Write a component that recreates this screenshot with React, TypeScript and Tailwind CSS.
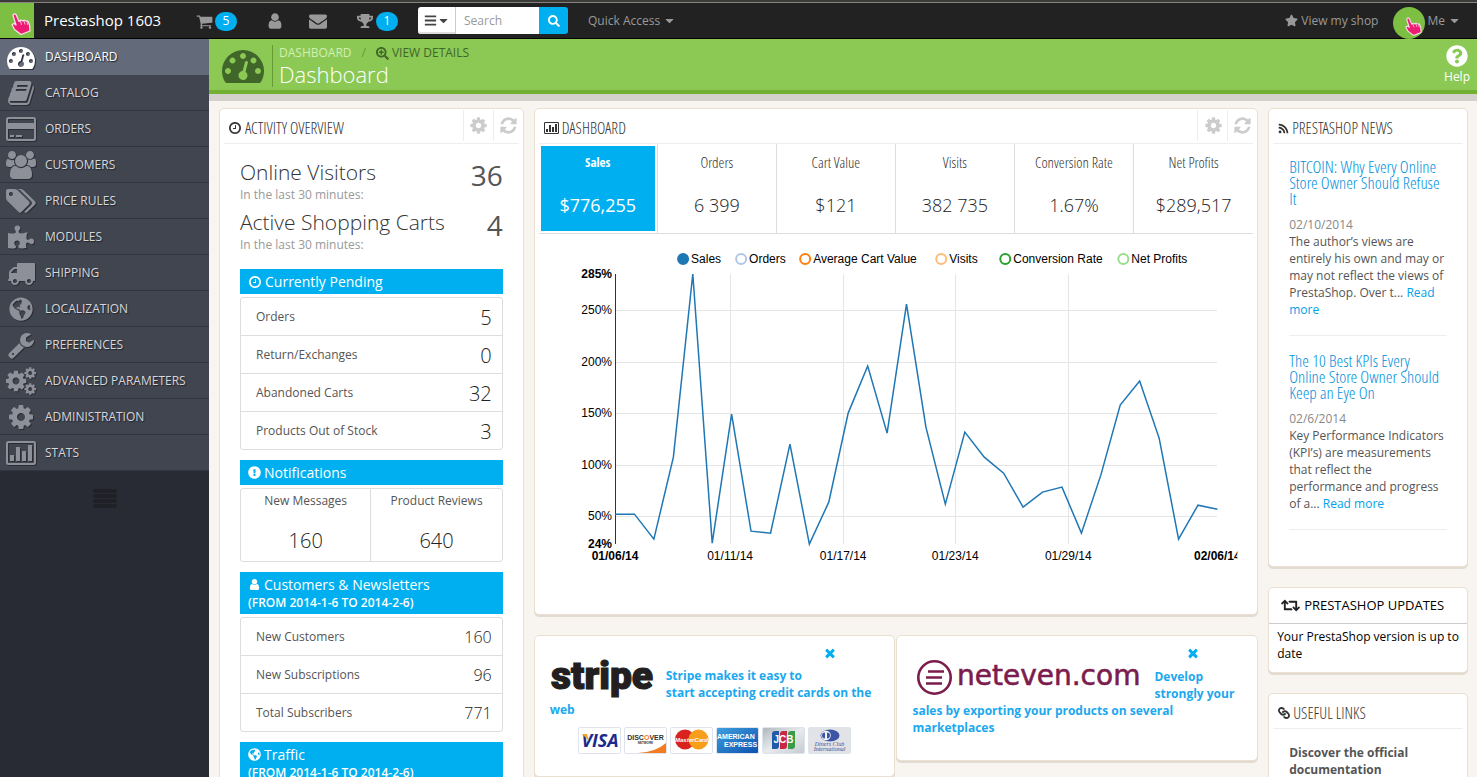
import React from "react";
import {
  FaBars,
  FaCaretDown,
  FaExclamationCircle,
  FaGlobeAmericas,
  FaLink,
  FaPuzzlePiece,
  FaQuestionCircle,
  FaRetweet,
  FaRss,
  FaSearch,
  FaSearchPlus,
  FaStar,
  FaTrophy,
} from "react-icons/fa";

const PATHS = {
  tachometer:
    "M384 1152q0-53-37.500-90.500t-90.500-37.500-90.500 37.500-37.500 90.500 37.500 90.500 90.500 37.500 90.500-37.500 37.500-90.500zm192-448q0-53-37.500-90.500t-90.500-37.500-90.500 37.500-37.500 90.500 37.500 90.500 90.500 37.500 90.500-37.500 37.500-90.500zm428 481l101-382q6-26-7.500-48.500t-38.500-29.500-48 6.500-30 39.500l-101 382q-60 5-107 43.500t-63 98.500q-20 77 20 146t117 89 146-20 89-117q16-60-6-117t-72-91zm660-33q0-53-37.500-90.500t-90.500-37.500-90.500 37.500-37.500 90.500 37.500 90.500 90.500 37.500 90.500-37.500 37.500-90.500zm-640-640q0-53-37.500-90.500t-90.500-37.500-90.500 37.500-37.500 90.500 37.500 90.500 90.500 37.500 90.500-37.500 37.500-90.500zm448 192q0-53-37.500-90.500t-90.500-37.500-90.500 37.500-37.500 90.500 37.500 90.500 90.500 37.500 90.500-37.500 37.500-90.500zm320 448q0 261-141 483-19 29-54 29h-1402q-35 0-54-29-141-221-141-483 0-182 71-348t191-286 286-191 348-71 348 71 286 191 191 286 71 348z",
  book: "M1703 478q40 57 18 129l-275 906q-19 64-76.500 107.500t-122.500 43.500h-923q-77 0-148.500-53.500t-99.500-131.500q-24-67-2-127 0-4 3-27t4-37q1-8-3-21.500t-3-19.500q2-11 8-21t16.500-23.500 16.500-23.500q23-38 45-91.500t30-91.500q3-10 .5-30t-.5-28q3-11 17-28t17-23q21-36 42-92t25-90q1-9-2.500-32t.5-28q4-13 22-30.500t22-22.500q19-26 42.500-84.500t27.500-96.500q1-8-3-25.500t-2-26.500q2-8 9-18t18-23 17-21q8-12 16.500-30.500t15-35 16-36 19.500-32 26.500-23.500 36-11.500 47.500 5.500l-1 3q38-9 51-9h761q74 0 114 56t18 130l-274 906q-36 119-71.500 153.500t-128.500 34.500h-869q-27 0-38 15-11 16-1 43 24 70 144 70h923q29 0 56-15.500t35-41.500l300-987q7-22 5-57 38 15 59 43zm-1064 2q-4 13 2 22.500t20 9.500h608q13 0 25.500-9.500t16.500-22.500l21-64q4-13-2-22.500t-20-9.500h-608q-13 0-25.500 9.500t-16.500 22.500zm-83 256q-4 13 2 22.500t20 9.500h608q13 0 25.500-9.500t16.500-22.500l21-64q4-13-2-22.500t-20-9.500h-608q-13 0-25.500 9.500t-16.500 22.500z",
  tags: "M448 448q0-53-37.500-90.500t-90.500-37.500-90.500 37.500-37.500 90.500 37.500 90.500 90.500 37.500 90.500-37.500 37.500-90.500zm1067 576q0 53-37 90l-491 492q-39 37-91 37-53 0-90-37l-715-716q-38-37-64.500-101t-26.500-117v-416q0-52 38-90t90-38h416q53 0 117 26.500t102 64.500l715 714q37 39 37 91zm384 0q0 53-37 90l-491 492q-39 37-91 37-36 0-59-14t-53-45l470-470q37-37 37-90 0-52-37-91l-715-714q-38-38-102-64.500t-117-26.500h224q53 0 117 26.500t102 64.500l715 714q37 39 37 91z",
  truck:
    "M640 1408q0-52-38-90t-90-38-90 38-38 90 38 90 90 38 90-38 38-90zm-384-512h384v-256h-158q-13 0-22 9l-195 195q-9 9-9 22v30zm1280 512q0-52-38-90t-90-38-90 38-38 90 38 90 90 38 90-38 38-90zm256-1088v1024q0 15-4 26.500t-13.500 18.500-16.500 11.500-23.500 6-22.500 2-25.500 0-22.500-.5q0 106-75 181t-181 75-181-75-75-181h-384q0 106-75 181t-181 75-181-75-75-181h-64q-3 0-22.500.5t-25.500 0-22.500-2-23.500-6-16.500-11.500-13.500-18.500-4-26.500q0-26 19-45t45-19v-320q0-8-.5-35t0-38 2.500-34.500 6.500-37 14-30.500 22.500-30l198-198q19-19 50.500-32t58.500-13h160v-192q0-26 19-45t45-19h1024q26 0 45 19t19 45z",
  cog: "M1152 896q0-106-75-181t-181-75-181 75-75 181 75 181 181 75 181-75 75-181zm512-109v222q0 12-8 23t-20 13l-185 28q-19 54-39 91 35 50 107 138 10 12 10 25t-9 23q-27 37-99 108t-94 71q-12 0-26-9l-138-108q-44 23-91 38-16 136-29 186-7 28-36 28h-222q-14 0-24.500-8.500t-11.500-21.500l-28-184q-49-16-90-37l-141 107q-10 9-25 9-14 0-25-11-126-114-165-168-7-10-7-23 0-12 8-23 15-21 51-66.500t54-70.500q-27-50-41-99l-183-27q-13-2-21-12.500t-8-23.500v-222q0-12 8-23t19-13l186-28q14-46 39-92-40-57-107-138-10-12-10-24 0-10 9-23 26-36 98.500-107.500t94.500-71.500q13 0 26 10l138 107q44-23 91-38 16-136 29-186 7-28 36-28h222q14 0 24.500 8.500t11.500 21.500l28 184q49 16 90 37l142-107q9-9 24-9 13 0 25 10 129 119 165 170 7 8 7 22 0 12-8 23-15 21-51 66.500t-54 70.500q26 50 41 98l183 28q13 2 21 12.500t8 23.500z",
  user: "M1536 1399q0 109-62.500 187t-150.500 78h-854q-88 0-150.500-78t-62.500-187q0-85 8.500-160.500t31.500-152 58.500-131 94-89 134.500-34.500q131 128 313 128t313-128q76 0 134.500 34.500t94 89 58.500 131 31.500 152 8.500 160.500zm-256-887q0 159-112.500 271.500t-271.500 112.500-271.500-112.500-112.500-271.500 112.500-271.500 271.500-112.500 271.500 112.500 112.500 271.500z",
  users:
    "M593 896q-162 5-265 128h-134q-82 0-138-40.500t-56-118.500q0-353 124-353 6 0 43.500 21t97.500 42.500 119 21.500q67 0 133-23-5 37-5 66 0 159 93 293zm1071 637q0 120-73 189.500t-194 69.500h-874q-121 0-194-69.500t-73-189.500q0-53 3.500-103.500t14-109 26.500-108.500 43-97.500 62-81 85.500-53.500 111.500-20q10 0 43 21.500t73 48 107 48 135 21.500 135-21.500 107-48 73-48 43-21.500q61 0 111.500 20t85.500 53.500 62 81 43 97.500 26.500 108.500 14 109 3.500 103.500zm-1024-1277q0 106-75 181t-181 75-181-75-75-181 75-181 181-75 181 75 75 181zm704 384q0 159-112.500 271.500t-271.500 112.500-271.500-112.500-112.500-271.500 112.500-271.500 271.500-112.500 271.500 112.500 112.500 271.500zm576 225q0 78-56 118.500t-138 40.500h-134q-103-123-265-128 93-134 93-293 0-29-5-66 66 23 133 23 59 0 119-21.500t97.500-42.500 43.500-21q124 0 124 353zm-128-609q0 106-75 181t-181 75-181-75-75-181 75-181 181-75 181 75 75 181z",
  wrench:
    "M448 1472q0-26-19-45t-45-19-45 19-19 45 19 45 45 19 45-19 19-45zm644-420l-682 682q-37 37-90 37-52 0-91-37l-106-108q-38-36-38-90 0-53 38-91l681-681q39 98 114.500 173.500t173.500 114.500zm634-435q0 39-23 106-47 134-164.500 217.500t-258.500 83.500q-185 0-316.500-131.500t-131.500-316.500 131.500-316.500 316.500-131.500q58 0 121.500 16.500t107.500 46.500q16 11 16 28t-16 28l-293 169v224l193 107q5-3 79-48.500t135.500-81 70.500-35.500q15 0 23.500 10t8.500 25z",
  cart: "M704 1536q0 52-38 90t-90 38-90-38-38-90 38-90 90-38 90 38 38 90zm896 0q0 52-38 90t-90 38-90-38-38-90 38-90 90-38 90 38 38 90zm128-1088v512q0 24-16.500 42.500t-40.500 21.500l-1044 122q13 60 13 70 0 16-24 64h920q26 0 45 19t19 45-19 45-45 19h-1024q-26 0-45-19t-19-45q0-11 8-31.500t16-36 21.500-40 15.500-29.500l-177-823h-204q-26 0-45-19t-19-45 19-45 45-19h256q16 0 28.500 6.500t19.500 15.500 13 24.500 8 26 5.500 29.500 4.500 26h1201q26 0 45 19t19 45z",
  envelope:
    "M1792 710v794q0 66-47 113t-113 47h-1472q-66 0-113-47t-47-113v-794q44 49 101 87 362 246 497 345 57 42 92.500 65.500t94.500 48 110 24.500h2q51 0 110-24.500t94.500-48 92.500-65.500q170-123 498-345 57-39 100-87zm0-294q0 79-49 151t-122 123q-376 261-468 325-10 7-42.500 31t-54 38.500-52 32.500-57.500 27-50 9h-2q-23 0-50-9t-57.500-27-52-32.500-54-38.500-42.500-31q-91-64-262-182.500t-205-142.500q-62-42-117-115.500t-55-136.500q0-78 41.500-130t118.500-52h1472q65 0 112.500 47t47.500 113z",
  clock:
    "M1024 544v448q0 14-9 23t-23 9h-320q-14 0-23-9t-9-23v-64q0-14 9-23t23-9h224v-352q0-14 9-23t23-9h64q14 0 23 9t9 23zm416 352q0-148-73-273t-198-198-273-73-273 73-198 198-73 273 73 273 198 198 273 73 273-73 198-198 73-273zm224 0q0 209-103 385.500t-279.500 279.500-385.500 103-385.500-103-279.500-279.500-103-385.500 103-385.500 279.500-279.500 385.500-103 385.500 103 279.500 279.500 103 385.500z",
  refresh:
    "M1639 1056q0 5-1 7-64 268-268 434.500t-478 166.500q-146 0-282.500-55t-243.500-157l-129 129q-19 19-45 19t-45-19-19-45v-448q0-26 19-45t45-19h448q26 0 45 19t19 45-19 45l-137 137q71 66 161 102t187 36q134 0 250-65t186-179q11-17 53-117 8-23 30-23h192q13 0 22.500 9.500t9.500 22.500zm25-800v448q0 26-19 45t-45 19h-448q-26 0-45-19t-19-45 19-45l138-138q-148-137-349-137-134 0-250 65t-186 179q-11 17-53 117-8 23-30 23h-199q-13 0-22.500-9.500t-9.500-22.500v-7q65-268 270-434.500t480-166.500q146 0 284 55.500t245 156.500l130-129q19-19 45-19t45 19 19 45z",
  times:
    "M1490 1322q0 40-28 68l-136 136q-28 28-68 28t-68-28l-294-294-294 294q-28 28-68 28t-68-28l-136-136q-28-28-28-68t28-68l294-294-294-294q-28-28-28-68t28-68l136-136q28-28 68-28t68 28l294 294 294-294q28-28 68-28t68 28l136 136q28 28 28 68t-28 68l-294 294 294 294q28 28 28 68z",
};

type IconName = keyof typeof PATHS;

function Icon({ name, className }: { name: IconName; className: string }) {
  const wide = name === "tags" || name === "users";
  return (
    <svg viewBox={wide ? "0 0 1920 1792" : "0 0 1792 1792"} className={className} fill="currentColor" aria-hidden="true">
      <path d={PATHS[name]} />
    </svg>
  );
}

function CogsIcon({ className }: { className: string }) {
  return (
    <svg viewBox="0 0 30 28" className={className} fill="currentColor" aria-hidden="true">
      <g transform="translate(-2 2) scale(0.0134)">
        <path d={PATHS.cog} />
      </g>
      <g transform="translate(17.500 -0.700) scale(0.0075)">
        <path d={PATHS.cog} />
      </g>
      <g transform="translate(17.500 15.300) scale(0.0075)">
        <path d={PATHS.cog} />
      </g>
    </svg>
  );
}

function CardIcon({ className }: { className: string }) {
  return (
    <svg viewBox="0 0 30 24" className={className} fill="currentColor" aria-hidden="true">
      <path
        fillRule="evenodd"
        d="M2.500 0h25A2.500 2.500 0 0 1 30 2.500v19a2.500 2.500 0 0 1-2.500 2.500h-25A2.500 2.500 0 0 1 0 21.500v-19A2.500 2.500 0 0 1 2.500 0zM2 2.800V6h26V2.800q0-.8-.8-.8H2.800q-.8 0-.8.8zM2 12v9.200q0 .8.800.8h24.400q.8 0 .8-.8V12z"
      />
      <path d="M4 18h4v2H4zM10 18h6v2h-6z" />
    </svg>
  );
}

function ChartIcon({ className }: { className: string }) {
  return (
    <svg viewBox="0 0 30 24" className={className} fill="currentColor" aria-hidden="true">
      <path
        fillRule="evenodd"
        d="M2.500 0h25A2.500 2.500 0 0 1 30 2.500v19a2.500 2.500 0 0 1-2.500 2.500h-25A2.500 2.500 0 0 1 0 21.500v-19A2.500 2.500 0 0 1 2.500 0zM2 2.800v18.400q0 .8.800.8h24.400q.8 0 .8-.8V2.800q0-.8-.8-.8H2.800q-.8 0-.8.800z"
      />
      <path d="M4 14h4v6H4zM10 6h4v14h-4zM16 10h4v10h-4zM22 4h4v16h-4z" />
    </svg>
  );
}

function Pointer({ className }: { className: string }) {
  return (
    <svg viewBox="0 0 20 22" className={className} aria-hidden="true">
      <path
        d="M2 2.500Q3-.2 5 1.500L8 8.500 9.500 7l2.500 1 1-1 2.500 1.200L17 8l1.500 4 .5 6-9 3.500-6.500-5L1 11.500l2-1 2 1.500z"
        fill="#ec1c74"
        stroke="#fbe3ec"
        strokeWidth="1.200"
        strokeLinejoin="round"
      />
      <path d="M9.500 8l1 4M13 8l1 3.500M16 9l.8 3" stroke="#fbe3ec" strokeWidth="0.800" fill="none" />
    </svg>
  );
}

const condensed = "font-['Ubuntu_Condensed','Open_Sans_Condensed_Light','Open_Sans_Condensed',sans-serif]";
const condensedBold = "font-['Ubuntu_Condensed','Open_Sans_Condensed',sans-serif]";

const menu: { label: string; icon: React.ReactNode }[] = [
  { label: "Dashboard", icon: <Icon name="tachometer" className="size-7" /> },
  { label: "Catalog", icon: <Icon name="book" className="size-7" /> },
  { label: "Orders", icon: <CardIcon className="h-6 w-[30px]" /> },
  { label: "Customers", icon: <Icon name="users" className="h-7 w-[30px]" /> },
  { label: "Price Rules", icon: <Icon name="tags" className="h-7 w-[30px]" /> },
  { label: "Modules", icon: <FaPuzzlePiece className="size-[26px]" /> },
  { label: "Shipping", icon: <Icon name="truck" className="size-7" /> },
  { label: "Localization", icon: <FaGlobeAmericas className="size-6" /> },
  { label: "Preferences", icon: <Icon name="wrench" className="size-7" /> },
  { label: "Advanced Parameters", icon: <CogsIcon className="h-7 w-[30px]" /> },
  { label: "Administration", icon: <Icon name="cog" className="size-7" /> },
  { label: "Stats", icon: <ChartIcon className="h-6 w-[30px]" /> },
];

function Sidebar() {
  return (
    <nav className="flex w-[209px] shrink-0 flex-col bg-[#282b33]">
      <ul>
        {menu.map((m, i) => (
          <li key={m.label}>
            <a
              href="#"
              className={
                i === 0
                  ? "flex h-9 items-center bg-[#636a7a] pl-[6px] text-[12px] text-white uppercase [text-shadow:1px_1px_1px_#22242b]"
                  : "flex h-9 items-center border-b border-[#323541] bg-[#414550] pl-[6px] text-[12px] text-[#d6d7da] uppercase [text-shadow:1px_1px_1px_#22242b]"
              }
            >
              <span
                className={
                  i === 0
                    ? "flex w-[30px] justify-center text-white drop-shadow-[1px_1px_0_#2b2d35]"
                    : "flex w-[30px] justify-center text-[#8d9098] drop-shadow-[1px_1px_0_#2b2d35]"
                }
              >
                {m.icon}
              </span>
              <span className="pl-[9px]">{m.label}</span>
            </a>
          </li>
        ))}
      </ul>
      <button type="button" aria-label="Collapse menu" className="mt-[18px] flex flex-col gap-px self-center">
        <span className="h-1 w-6 rounded-xs bg-[#1f2126]" />
        <span className="h-1 w-6 rounded-xs bg-[#1f2126]" />
        <span className="h-1 w-6 rounded-xs bg-[#1f2126]" />
        <span className="h-1 w-6 rounded-xs bg-[#1f2126]" />
      </button>
    </nav>
  );
}

function Badge({ children }: { children: React.ReactNode }) {
  return (
    <span className="flex h-[19px] w-[22px] items-center justify-center rounded-full bg-[#00aff0] text-[12px] text-white">
      {children}
    </span>
  );
}

function TopBar() {
  return (
    <header className="flex h-[39px] shrink-0 flex-col border-b border-black bg-[#222] text-[#999]">
      <div className="h-[3px] shrink-0 border-b border-[#85837f] bg-[#3c3b37]" />
      <div className="flex min-h-0 flex-1 items-center">
        <a href="#" aria-label="Shop front" className="flex h-full w-[34px] justify-end bg-[#7cbf42] pt-[10px] pr-[3px]">
          <Pointer className="h-[22px] w-5" />
        </a>
        <a href="#" className="w-[162px] pl-[10px] text-[15px] text-white">
          Prestashop 1603
        </a>
        <a href="#" aria-label="Orders" className="flex w-[70px] items-center gap-[2px] pt-px">
          <Icon name="cart" className="size-[17px]" />
          <Badge>5</Badge>
        </a>
        <a href="#" aria-label="Customers" className="w-[43px] pt-px">
          <Icon name="user" className="size-[18px]" />
        </a>
        <a href="#" aria-label="Messages" className="w-12 pt-px">
          <Icon name="envelope" className="size-[18px]" />
        </a>
        <a href="#" aria-label="Achievements" className="flex w-[61px] items-center gap-[3px] pt-px">
          <FaTrophy className="size-4" />
          <Badge>1</Badge>
        </a>
        <form className="flex h-[27px]">
          <button
            type="button"
            aria-label="Search scope"
            className="flex w-[38px] items-center justify-center rounded-l-[3px] border-r border-[#ccc] bg-white text-[#444] shadow-[inset_0_-2px_0_#ddd]"
          >
            <FaBars className="size-[13px]" />
            <FaCaretDown className="size-[13px]" />
          </button>
          <input
            aria-label="Search"
            placeholder="Search"
            className="w-[83px] bg-white px-2 text-[12px] text-[#555] outline-none placeholder:text-[#999]"
          />
          <button
            type="submit"
            aria-label="Go"
            className="flex w-[29px] items-center justify-center rounded-r-[3px] bg-[#00aff0] text-white"
          >
            <FaSearch className="size-3" />
          </button>
        </form>
        <button type="button" className="ml-5 flex items-center gap-[3px] text-[12px]">
          Quick Access
          <FaCaretDown className="size-[13px]" />
        </button>
        <div className="ml-auto flex items-center text-[12px]">
          <a href="#" className="flex items-center gap-[3px]">
            <FaStar className="size-[13px]" />
            View my shop
          </a>
          <button type="button" className="ml-[15px] flex items-center pr-4">
            <span className="mt-1 flex size-8 items-end justify-end rounded-full bg-[#7cbf42] pr-[3px] pb-[3px]">
              <Pointer className="h-[19px] w-[17px]" />
            </span>
            <span className="px-[2px]">Me</span>
            <FaCaretDown className="ml-px size-[13px]" />
          </button>
        </div>
      </div>
    </header>
  );
}

function PageHead() {
  return (
    <div className="shrink-0 border-b-7 border-[#d4d0cb]">
      <div className="flex h-[55px] border-b-4 border-[#72b034] bg-[#8bc954]">
        <Icon name="tachometer" className="mt-[5px] ml-[13px] size-[42px] text-[#41662a]" />
        <div className="mt-[6px] ml-[8px] h-[42px] border-l border-[#659a35] pl-[6px]">
          <nav className="flex h-4 items-center text-[12px] text-[#41662a] uppercase">
            <a href="#" className="text-[#d3efb5]">
              Dashboard
            </a>
            <span className="px-[10px] text-[#659a35]">/</span>
            <a href="#" className="flex items-center gap-[3px]">
              <FaSearchPlus className="size-[13px]" />
              View details
            </a>
          </nav>
          <h1 className="text-[22px] leading-[26px] font-light text-white">Dashboard</h1>
        </div>
        <a href="#" className="mr-[7px] ml-auto flex flex-col items-center pt-[6px] text-[12px] leading-5 font-medium text-white">
          <FaQuestionCircle className="size-[22px]" />
          Help
        </a>
      </div>
    </div>
  );
}

const panelClass = "rounded-[5px] border border-[#eadfd0] bg-white shadow-[0_2px_0_#e1dbd2]";

function PanelHeading({ icon, title, tools }: { icon: React.ReactNode; title: string; tools?: boolean }) {
  return (
    <div className="mx-1 flex h-[35px] items-start border-b border-[#eee]">
      <h2
        className={`${condensed} flex items-center gap-[3px] pt-[9px] pl-1 text-[16px] leading-5 text-[#333] uppercase`}
      >
        {icon}
        {title}
      </h2>
      {tools && (
        <div className="ml-auto flex pt-px text-[#ccc]">
          <button type="button" aria-label="Configure" className="flex h-[31px] w-[30px] items-center justify-center border-l border-[#eee] pl-px">
            <Icon name="cog" className="size-[19px]" />
          </button>
          <button type="button" aria-label="Refresh" className="flex h-[31px] w-[26px] items-center justify-end border-l border-[#eee] pr-px">
            <Icon name="refresh" className="size-[19px]" />
          </button>
        </div>
      )}
    </div>
  );
}

function BlueHeading({ icon, title, range }: { icon: React.ReactNode; title: string; range?: boolean }) {
  return (
    <h3 className="mb-[3px] bg-[#00aff0] px-2 text-[14px] leading-[25px] font-medium text-white">
      <span className="flex items-center gap-[3px]">
        {icon}
        {title}
      </span>
      {range && <small className="block pb-[6px] text-[12px] leading-[11px] font-semibold">(FROM 2014-1-6 TO 2014-2-6)</small>}
    </h3>
  );
}

function StatList({ rows, small }: { rows: [string, string][]; small?: boolean }) {
  return (
    <ul className="mb-[10px] divide-y divide-[#ddd] rounded-[3px] border border-[#ddd]">
      {rows.map(([label, value]) => (
        <li key={label} className="flex h-[38px] items-center justify-between pr-[10px] pl-[15px] text-[12px] last:h-[37px]">
          {label}
          <span className={small ? "text-[16px] font-light text-[#222]" : "pt-[2px] text-[20px] font-light text-[#222]"}>
            {value}
          </span>
        </li>
      ))}
    </ul>
  );
}

function Activity() {
  return (
    <section className={`${panelClass} col-span-3 h-[900px]`}>
      <PanelHeading icon={<Icon name="clock" className="size-[14px]" />} title="Activity overview" tools />
      <div className="px-5">
        {[
          ["Online Visitors", "36"],
          ["Active Shopping Carts", "4"],
        ].map(([label, value]) => (
          <div key={label} className="flex h-[50px] justify-between first:mt-[17px]">
            <div>
              <p className="text-[21px] leading-[22px] font-light text-[#333]">{label}</p>
              <p className="pt-[2px] text-[12px] leading-5 text-[#999]">{"In the last 30 minutes:"}</p>
            </div>
            <span className="text-[28px] leading-7">{value}</span>
          </div>
        ))}
        <div className="h-2" />
        <BlueHeading icon={<Icon name="clock" className="size-[14px]" />} title="Currently Pending" />
        <StatList
          rows={[
            ["Orders", "5"],
            ["Return/Exchanges", "0"],
            ["Abandoned Carts", "32"],
            ["Products Out of Stock", "3"],
          ]}
        />
        <BlueHeading icon={<FaExclamationCircle className="size-[13px]" />} title="Notifications" />
        <div className="mb-[10px] grid grid-cols-2 divide-x divide-[#ddd] rounded-[3px] border border-[#ddd] text-center">
          {[
            ["New Messages", "160"],
            ["Product Reviews", "640"],
          ].map(([label, value]) => (
            <div key={label} className="h-[72px] pt-[3px]">
              <p className="text-[12px] leading-[18px]">{label}</p>
              <p className="pt-[15px] text-[20px] leading-8 font-light text-[#222]">{value}</p>
            </div>
          ))}
        </div>
        <BlueHeading icon={<Icon name="user" className="size-[13px]" />} title="Customers & Newsletters" range />
        <StatList
          small
          rows={[
            ["New Customers", "160"],
            ["New Subscriptions", "96"],
            ["Total Subscribers", "771"],
          ]}
        />
        <BlueHeading icon={<FaGlobeAmericas className="size-[13px]" />} title="Traffic" range />
      </div>
    </section>
  );
}

const kpis = [
  ["Sales", "$776,255"],
  ["Orders", "6 399"],
  ["Cart Value", "$121"],
  ["Visits", "382 735"],
  ["Conversion Rate", "1.67%"],
  ["Net Profits", "$289,517"],
];

const legend: [number, string, string][] = [
  [144, "Sales", "#1f77b4"],
  [202, "Orders", "#aec7e8"],
  [266, "Average Cart Value", "#ff7f0e"],
  [402, "Visits", "#ffbb78"],
  [466, "Conversion Rate", "#2ca02c"],
  [584, "Net Profits", "#98df8a"],
];

const yTicks: [number, string][] = [
  [76, "250%"],
  [128, "200%"],
  [179, "150%"],
  [231, "100%"],
  [282, "50%"],
];

const xTicks: [number, string][] = [
  [191, "01/11/14"],
  [304, "01/17/14"],
  [416, "01/23/14"],
  [529, "01/29/14"],
];

const series = [
  280, 280, 305, 223, 40, 309, 180, 297, 299, 210, 310, 268, 179, 132, 199, 70, 193, 270, 198, 223, 239, 273, 258, 253,
  299, 241, 171, 147, 204, 305, 271, 275,
];

function Chart() {
  const points = series.map((y, i) => `${(76 + i * 19.42).toFixed(1)},${y}`).join(" ");
  return (
    <svg viewBox="0 0 714 375" className="block w-full font-['Liberation_Sans',Arial,sans-serif] text-[12px]" role="img" aria-label="Sales chart">
      {legend.map(([x, label, color], i) => (
        <g key={label}>
          <circle cx={x} cy="25" r="5" fill={i === 0 ? color : "#fff"} stroke={color} strokeWidth="2" />
          <text x={x + 8} y="29">
            {label}
          </text>
        </g>
      ))}
      {yTicks.map(([y, label]) => (
        <g key={label}>
          <line x1="76" x2="678" y1={y} y2={y} stroke="#e5e5e5" shapeRendering="crispEdges" />
          <text x="73" y={y + 4} textAnchor="end">
            {label}
          </text>
        </g>
      ))}
      {xTicks.map(([x, label]) => (
        <g key={label}>
          <line x1={x} x2={x} y1="40" y2="310" stroke="#e5e5e5" shapeRendering="crispEdges" />
          <text x={x} y="326" textAnchor="middle">
            {label}
          </text>
        </g>
      ))}
      <line x1="76" x2="76" y1="40" y2="310" stroke="#333" shapeRendering="crispEdges" />
      <g fontWeight="bold">
        <text x="73" y="44" textAnchor="end">
          285%
        </text>
        <text x="73" y="314" textAnchor="end">
          24%
        </text>
        <text x="76" y="326" textAnchor="middle">
          01/06/14
        </text>
        <clipPath id="axis-end">
          <rect x="640" y="310" width="58" height="24" />
        </clipPath>
        <text x="678" y="326" textAnchor="middle" clipPath="url(#axis-end)">
          02/06/14
        </text>
      </g>
      <polyline points={points} fill="none" stroke="#1f77b4" strokeWidth="1.500" />
    </svg>
  );
}

function DashboardPanel() {
  return (
    <section className={panelClass}>
      <PanelHeading icon={<ChartIcon className="ml-px h-3 w-[15px]" />} title="Dashboard" tools />
      <div className="mx-1 grid h-[90px] grid-cols-6 divide-x divide-[#ddd] border-b border-[#ddd] text-center">
        {kpis.map(([label, value], i) => (
          <button key={label} type="button" className={i === 0 ? "flex p-[2px] text-white" : "flex p-[2px]"}>
            <span className={i === 0 ? "h-full w-full bg-[#00aff0] pt-[6px]" : "h-full w-full pt-[6px]"}>
              <span
                className={
                  i === 0
                    ? `${condensedBold} block text-[13px] leading-5 font-bold`
                    : `${condensed} block text-[15px] leading-5 text-[#333]`
                }
              >
                {label}
              </span>
              <span
                className={
                  i === 0
                    ? "block pt-[17px] text-[18px] leading-8"
                    : "block pt-[17px] text-[18px] leading-8 font-light text-[#222]"
                }
              >
                {value}
              </span>
            </span>
          </button>
        ))}
      </div>
      <div className="mx-1 pb-[5px]">
        <Chart />
      </div>
    </section>
  );
}

function StripeCards() {
  return (
    <svg viewBox="0 0 273 27" className="mx-auto mt-[9px] h-[27px] w-[273px] font-bold" aria-label="Accepted cards" role="img">
      <defs>
        <linearGradient id="amex" x1="0" y1="0" x2="1" y2="1">
          <stop offset="0" stopColor="#3ea1e0" />
          <stop offset="1" stopColor="#0d4fae" />
        </linearGradient>
        <linearGradient id="silver" x1="0" y1="0" x2="1" y2="1">
          <stop offset="0" stopColor="#aeb6bc" />
          <stop offset="0.500" stopColor="#e8ebed" />
          <stop offset="1" stopColor="#c3cad0" />
        </linearGradient>
      </defs>
      <g stroke="#dfe3ec">
        <rect x="0.500" y="0.500" width="42" height="26" rx="1.500" fill="#fff" />
        <rect x="46.500" y="0.500" width="42" height="26" rx="1.500" fill="#fff" />
        <rect x="92.500" y="0.500" width="42" height="26" rx="1.500" fill="#fff" />
        <rect x="138.500" y="0.500" width="42" height="26" rx="1.500" fill="url(#amex)" />
        <rect x="184.500" y="0.500" width="42" height="26" rx="1.500" fill="url(#silver)" />
        <rect x="230.500" y="0.500" width="42" height="26" rx="1.500" fill="#e1e3e6" />
      </g>
      <text x="22" y="20" textAnchor="middle" fontSize="18" fontStyle="italic" fill="#1a2a8c" className="font-['Open_Sans',sans-serif]">
        VISA
      </text>
      <path d="M4 7h5l2 7z" fill="#f2a52b" />
      <path d="M60 26q18-1 28-10v10z" fill="#f47b20" />
      <g textAnchor="middle" fill="#333" className="font-['Liberation_Sans',sans-serif]">
        <text x="67.500" y="13" fontSize="7">
          DISC<tspan fill="#f47b20">O</tspan>VER
        </text>
        <text x="67.500" y="17" fontSize="3">
          NETWORK
        </text>
      </g>
      <circle cx="107" cy="12.500" r="10" fill="#d8231f" />
      <circle cx="120.500" cy="12.500" r="10" fill="#f79f1a" />
      <text x="113.500" y="15" textAnchor="middle" fontSize="6" fontStyle="italic" fill="#fff" className="font-['Liberation_Sans',sans-serif]">
        MasterCard
      </text>
      <g fontSize="7" fill="#fff" className="font-['Liberation_Sans',sans-serif]">
        <text x="139" y="12">
          AMERICAN
        </text>
        <text x="146" y="20">
          EXPRESS
        </text>
      </g>
      <path d="M194 7q0-3 3-3h4v15q0 3-3 3h-4z" fill="#1f5ba8" />
      <path d="M202 7q0-3 3-3h4v15q0 3-3 3h-4z" fill="#c92743" />
      <path d="M210 7q0-3 3-3h4v15q0 3-3 3h-4z" fill="#3a9c48" />
      <text x="205.500" y="16" textAnchor="middle" fontSize="10" fill="#fff" className="font-['Liberation_Sans',sans-serif]">
        JCB
      </text>
      <ellipse cx="252" cy="8.500" rx="9.500" ry="6" fill="#3c55a4" />
      <circle cx="248" cy="8.500" r="4.800" fill="#f1f3f8" />
      <path d="M247 5.500a3 3 0 0 0 0 6zM249 5.500a3 3 0 0 1 0 6z" fill="#3c55a4" />
      <g fontSize="6" fontStyle="italic" fontWeight="normal" fill="#3c4f95" textAnchor="middle" className="font-['Liberation_Serif',serif]">
        <text x="251.500" y="19">
          Diners Club
        </text>
        <text x="251.500" y="24">
          International
        </text>
      </g>
    </svg>
  );
}

function Ads() {
  return (
    <div className="mt-5 grid grid-cols-2 items-start gap-px text-[12px] leading-[17px] font-bold text-[#1ba8ee]">
      <section className={`${panelClass} h-[142px] px-[15px]`}>
        <div className="flex justify-end pt-[10px] pr-[42px]">
          <button type="button" aria-label="Dismiss Stripe" className="text-[#00aff0]">
            <Icon name="times" className="size-[14px]" />
          </button>
        </div>
        <svg viewBox="0 0 106 48" className="float-left -mt-2 mr-[10px] h-12 w-[106px]" role="img" aria-label="stripe">
          <text
            x="1"
            y="37"
            fontSize="39"
            fontWeight="900"
            fill="#231f20"
            stroke="#231f20"
            strokeWidth="1.200"
            className="font-['Roboto',sans-serif]"
          >
            stripe
          </text>
        </svg>
        <p className="pt-[7px]">
          <a href="#">
            Stripe makes it easy to
            <br />
            start accepting credit cards on the web
          </a>
        </p>
        <StripeCards />
      </section>
      <section className={`${panelClass} h-[126px] px-[15px]`}>
        <div className="flex justify-end pt-[10px] pr-[42px]">
          <button type="button" aria-label="Dismiss Neteven" className="text-[#00aff0]">
            <Icon name="times" className="size-[14px]" />
          </button>
        </div>
        <svg viewBox="0 0 232 40" className="float-left mr-[10px] h-[40px] w-[232px] font-normal" role="img" aria-label="neteven.com">
          <circle cx="22.500" cy="17.500" r="16.200" fill="none" stroke="#7c1c4c" strokeWidth="2.600" />
          <path d="M16 11.500h16M14 17.500h16M14 23.500h16" stroke="#7c1c4c" strokeWidth="2.600" />
          <text x="45" y="25" fontSize="28" fill="#7c1c4c" stroke="#7c1c4c" strokeWidth="0.600" className="font-['DejaVu_Sans',sans-serif]">
            neteven.com
          </text>
        </svg>
        <p className="pt-2">
          <a href="#">Develop strongly your sales by exporting your products on several marketplaces</a>
        </p>
      </section>
    </div>
  );
}

const news = [
  {
    title: "BITCOIN: Why Every Online Store Owner Should Refuse It",
    date: "02/10/2014",
    text: "The author’s views are entirely his own and may or may not reflect the views of PrestaShop. Over t...",
  },
  {
    title: "The 10 Best KPIs Every Online Store Owner Should Keep an Eye On",
    date: "02/6/2014",
    text: "Key Performance Indicators (KPI’s) are measurements that reflect the performance and progress of a...",
  },
];

function Aside() {
  return (
    <aside className="col-span-2 flex flex-col gap-5">
      <section className={`${panelClass} h-[459px]`}>
        <PanelHeading icon={<FaRss className="ml-px size-[11px]" />} title="Prestashop news" />
        <div className="px-5 pt-[15px]">
          {news.map((n) => (
            <article key={n.title} className="mb-[17px] border-b border-[#eee] pb-[17px]">
              <h3 className={`${condensed} text-[17px] leading-4 text-[#0090dd]`}>
                <a href="#">{n.title}</a>
              </h3>
              <p className="pt-[9px] text-[12px] leading-[17px] text-[#888]">{n.date}</p>
              <p className="text-[12px] leading-[17px]">
                {n.text}{" "}
                <a href="#" className="text-[#00a2e8]">
                  Read more
                </a>
              </p>
            </article>
          ))}
        </div>
      </section>
      <section className={`${panelClass} h-[86px] text-black`}>
        <h2 className="flex h-9 items-center gap-1 border-b border-[#ccc] pl-3 text-[13px] uppercase">
          <FaRetweet className="size-[19px] text-[#222]" />
          Prestashop updates
        </h2>
        <p className="pt-1 pr-1 pl-2 text-[12px] leading-[17px]">Your PrestaShop version is up to date</p>
      </section>
      <section className={`${panelClass} h-[240px]`}>
        <PanelHeading icon={<FaLink className="ml-px size-3 rotate-90" />} title="Useful links" />
        <p className="px-5 pt-[15px] text-[12px] leading-[17px] font-bold">
          <a href="#">Discover the official documentation</a>
        </p>
      </section>
    </aside>
  );
}

export default function App() {
  return (
    <div className="flex h-screen flex-col overflow-hidden bg-[#f8f5f1] font-['Open_Sans',sans-serif] text-[#555]">
      <TopBar />
      <div className="flex min-h-0 flex-1">
        <Sidebar />
        <div className="flex min-w-0 flex-1 flex-col">
          <PageHead />
          <main className="grid min-h-0 flex-1 grid-cols-12 items-start gap-[10px] overflow-hidden pt-[7px] pr-[9px] pl-[10px]">
            <Activity />
            <div className="col-span-7">
              <DashboardPanel />
              <Ads />
            </div>
            <Aside />
          </main>
        </div>
      </div>
    </div>
  );
}
